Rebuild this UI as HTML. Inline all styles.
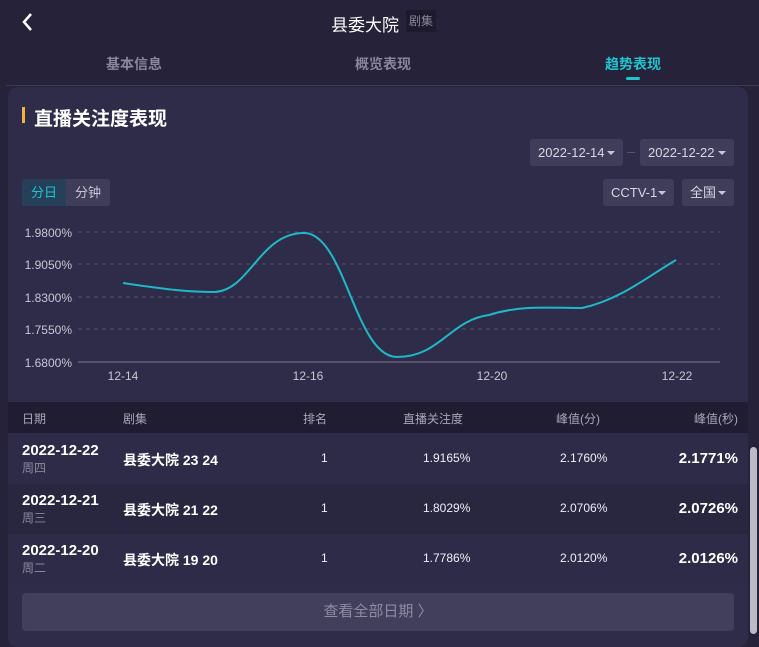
<!DOCTYPE html>
<html><head><meta charset="utf-8"><style>
*{margin:0;padding:0;box-sizing:border-box}
body{width:759px;height:634px;overflow:hidden;background:#25223a;font-family:"Liberation Sans","Noto Sans CJK SC",sans-serif;color:#fff;position:relative}
.abs{position:absolute}
.tab{position:absolute;top:54px;font-size:14px;font-weight:bold;color:#8a879c}
.card{position:absolute;left:8px;top:87px;width:740px;height:560px;background:#2f2c4a;border-radius:10px}
.sel{position:absolute;height:27px;background:#403d5a;border-radius:3px;font-size:13px;color:#d8d6e4;line-height:27px;padding-left:8px}
.sel:after{content:"";position:absolute;right:8px;top:12px;border:4px solid transparent;border-top:4px solid #c8c6d4}
.th{position:absolute;top:410px;font-size:12px;color:#a8a6b8}
.row{position:absolute;left:8px;width:740px;height:50px}
.d{position:absolute;left:14px;top:8px;font-size:15px;font-weight:bold}
.w{position:absolute;left:14px;top:25px;font-size:12px;color:#8a879c}
.n{position:absolute;left:115px;top:16px;font-size:14px;font-weight:bold}
.c{position:absolute;top:17px;font-size:12px;color:#f0eef6}
.big{position:absolute;right:10px;top:16px;font-size:15px;font-weight:bold}
</style></head><body>
<svg class="abs" style="left:20px;top:12px" width="16" height="20"><path d="M11 2 L4 10 L11 18" stroke="#fff" stroke-width="2.5" fill="none"/></svg>
<div class="abs" style="left:331px;top:11px;font-size:17px">县委大院</div>
<div class="abs" style="left:406px;top:10px;width:30px;height:22px;background:#1c1a2c;font-size:12px;color:#8a879c;line-height:22px;text-align:center">剧集</div>
<div class="tab" style="left:106px">基本信息</div>
<div class="tab" style="left:355px">概览表现</div>
<div class="tab" style="left:605px;color:#1fc4cc">趋势表现</div>
<div class="abs" style="left:626px;top:77px;width:14px;height:3px;background:#1fc4cc;border-radius:2px"></div>
<div class="abs" style="left:6px;top:85px;width:753px;height:1px;background:#3d3a55"></div>
<div class="card"></div>
<div class="abs" style="left:22px;top:107px;width:3px;height:16px;background:#f5b335"></div>
<div class="abs" style="left:34px;top:104px;font-size:19px;font-weight:bold">直播关注度表现</div>
<div class="sel" style="left:530px;top:139px;width:93px">2022-12-14</div>
<div class="abs" style="left:627px;top:152px;width:8px;height:1px;background:#55526c"></div>
<div class="sel" style="left:640px;top:139px;width:94px">2022-12-22</div>
<div class="abs" style="left:22px;top:179px;width:88px;height:27px;background:#403d5a;border-radius:3px"></div>
<div class="abs" style="left:22px;top:179px;width:44px;height:27px;background:#26405a;border-radius:3px 0 0 3px;color:#1fc4cc;font-size:13px;line-height:27px;text-align:center">分日</div>
<div class="abs" style="left:66px;top:179px;width:44px;height:27px;color:#c8c6d4;font-size:13px;line-height:27px;text-align:center">分钟</div>
<div class="sel" style="left:603px;top:179px;width:71px">CCTV-1</div>
<div class="sel" style="left:682px;top:179px;width:52px">全国</div>
<svg class="abs" style="left:0;top:0" width="759" height="400">
<g stroke="#56526e" stroke-dasharray="4 4" stroke-width="1"><line x1="78" y1="232" x2="720" y2="232"/><line x1="78" y1="264" x2="720" y2="264"/><line x1="78" y1="297" x2="720" y2="297"/><line x1="78" y1="329" x2="720" y2="329"/></g>
<line x1="78" y1="362" x2="720" y2="362" stroke="#56526e" stroke-width="2"/>
<g fill="#c8c6d4" font-size="12" font-family="Liberation Sans" text-anchor="end"><text x="72" y="237">1.9800%</text><text x="72" y="269">1.9050%</text><text x="72" y="302">1.8300%</text><text x="72" y="334">1.7550%</text><text x="72" y="367">1.6800%</text></g>
<g fill="#c8c6d4" font-size="12" font-family="Liberation Sans" text-anchor="middle"><text x="123" y="380">12-14</text><text x="308" y="380">12-16</text><text x="492" y="380">12-20</text><text x="677" y="380">12-22</text></g>
<path d="M123 283 C170 290 190 292 215 292 C250 290 260 233 304 233 C345 233 355 357 397 357 C440 357 450 320 489 315 C520 305 550 308 582 308 C620 300 650 275 676 260" stroke="#1fb8c8" stroke-width="2" fill="none"/>
</svg>
<div class="abs" style="left:8px;top:402px;width:740px;height:31px;background:#201d33"></div>
<div class="th" style="left:22px">日期</div>
<div class="th" style="left:123px">剧集</div>
<div class="th" style="left:303px">排名</div>
<div class="th" style="left:403px">直播关注度</div>
<div class="th" style="left:556px">峰值(分)</div>
<div class="th" style="left:694px">峰值(秒)</div>
<div class="row" style="top:434px;background:#2e2b49"><div class="d">2022-12-22</div><div class="w">周四</div><div class="n">县委大院 23 24</div><div class="c" style="left:313px">1</div><div class="c" style="left:415px">1.9165%</div><div class="c" style="left:552px">2.1760%</div><div class="big">2.1771%</div></div>
<div class="row" style="top:484px;background:#29263f"><div class="d">2022-12-21</div><div class="w">周三</div><div class="n">县委大院 21 22</div><div class="c" style="left:313px">1</div><div class="c" style="left:415px">1.8029%</div><div class="c" style="left:552px">2.0706%</div><div class="big">2.0726%</div></div>
<div class="row" style="top:534px;background:#2e2b49"><div class="d">2022-12-20</div><div class="w">周二</div><div class="n">县委大院 19 20</div><div class="c" style="left:313px">1</div><div class="c" style="left:415px">1.7786%</div><div class="c" style="left:552px">2.0120%</div><div class="big">2.0126%</div></div>
<div class="abs" style="left:22px;top:593px;width:712px;height:38px;background:#423f5c;border-radius:4px;color:#8e8ba2;font-size:15px;line-height:38px;text-align:center">查看全部日期 〉</div>
<div class="abs" style="left:750px;top:447px;width:7px;height:187px;background:#bcbac6;border-radius:4px"></div>
</body></html>
